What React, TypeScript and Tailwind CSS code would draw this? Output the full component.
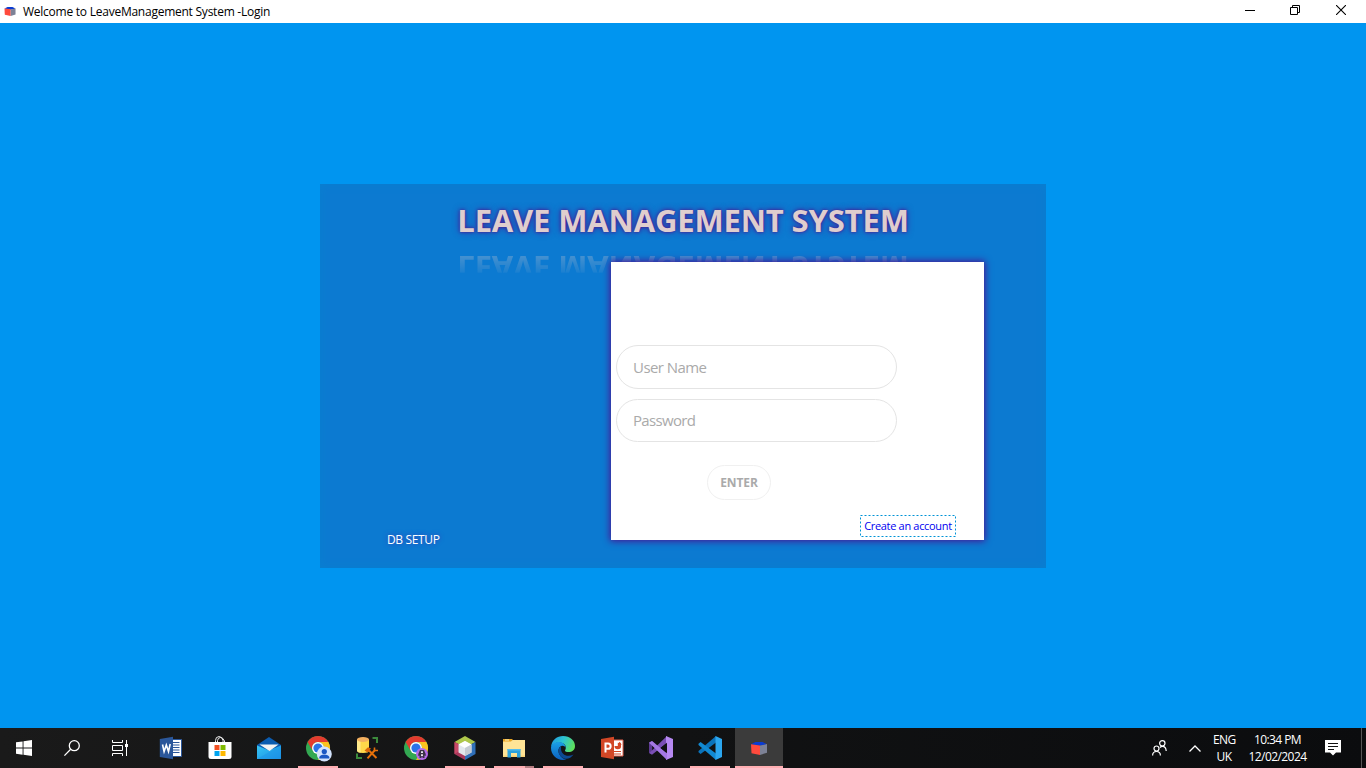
import React, { useState } from "react";

const svg = "block shrink-0 overflow-visible";

function Cube({ className }: { className: string }) {
  return (
    <svg viewBox="0 0 16 13" className={`${svg} ${className}`}>
      <path d="M0 2.200L4.500 0h7L16 2.200 9 3.800z" fill="#0a3bd2" />
      <path d="M0 2.200l9 1.200V13L.5 11.300z" fill="#ff4a3d" />
      <path d="M9 3.600L16 2v8.700L9 13z" fill="#7d8296" />
    </svg>
  );
}

function WindowsLogo() {
  return (
    <svg viewBox="0 0 16 16" className={`${svg} size-4`} fill="#fff">
      <path d="M0 2.300L6.600 1.400v6.200H0zM7.500 1.200L16 0v7.600H7.500zM0 8.500h6.600v6.200L0 13.800zM7.500 8.500H16V16l-8.500-1.200z" />
    </svg>
  );
}

function SearchGlyph() {
  return (
    <svg viewBox="0 0 16 16" className={`${svg} size-4`} fill="none" stroke="#fff" strokeWidth="1.300">
      <circle cx="10.300" cy="5.700" r="5" />
      <path d="M6.700 9.300L.4 15.600" />
    </svg>
  );
}

function TaskViewGlyph() {
  return (
    <svg viewBox="0 0 16 16" className={`${svg} size-4`} fill="none" stroke="#fff">
      <path d="M.5 0v2.500h10V0M.5 5.500h10v5H.5zM.5 16v-2.500h10V16M14.500 0v16" />
      <rect x="13" y="4" width="3" height="3" fill="#fff" stroke="none" />
    </svg>
  );
}

function WordIcon() {
  return (
    <svg viewBox="0 0 24 24" className={`${svg} size-6`}>
      <path d="M11 3.500h11.500v17H11z" fill="#fff" stroke="#2b579a" />
      <path d="M14 6.500h6.500M14 9h6.500M14 11.500h6.500M14 14h6.500M14 16.500h6.500" stroke="#2b579a" />
      <path d="M.8 3L14 .8v22.400L.8 21z" fill="#2b579a" />
      <path d="M3.500 8.500l1.600 7 2.200-6.500 2.200 6.500 1.700-7.500" fill="none" stroke="#fff" strokeWidth="1.600" />
    </svg>
  );
}

function StoreIcon() {
  return (
    <svg viewBox="0 0 24 24" className={`${svg} size-6`}>
      <path d="M7.500 7V4.500Q7.500 .7 11 .5q3.500.2 4 4V7M9.500 7V4.500Q10 1.500 12.500 1.500T16.500 5V7" fill="none" stroke="#e8e8e8" />
      <path d="M.5 6h23v14.500q0 2.500-2.500 2.500H3Q.5 23 .5 20.500z" fill="#fff" />
      <path d="M6.500 9h5v5h-5z" fill="#f25022" />
      <path d="M12.500 9h5v5h-5z" fill="#7fba00" />
      <path d="M6.500 15h5v5h-5z" fill="#00a4ef" />
      <path d="M12.500 15h5v5h-5z" fill="#ffb900" />
    </svg>
  );
}

function MailIcon() {
  return (
    <svg viewBox="0 0 24 24" className={`${svg} size-6`}>
      <defs>
        <linearGradient id="mailBody" x1="0" y1="0" x2="1" y2="1">
          <stop stopColor="#36c5f5" />
          <stop offset="1" stopColor="#1b8fe2" />
        </linearGradient>
      </defs>
      <path d="M0 9L12 1l12 8v8H0z" fill="#0b5cb0" />
      <path d="M0 9.500l12 5 12-5V23H0z" fill="url(#mailBody)" />
      <path d="M0 23L24 9.500V23z" fill="#1c94e8" opacity=".5" />
      <path d="M2.500 8.500h19L12.500 15z" fill="#f3f3f3" />
    </svg>
  );
}

function ChromeIcon({ badge }: { badge: "person" | "avatar" }) {
  return (
    <svg viewBox="0 0 24 24" className={`${svg} size-6`}>
      <circle cx="12" cy="12" r="12" fill="#33a852" />
      <path d="M1.600 6A12 12 0 0 1 22.400 6H12a6 6 0 0 0-5.200 9z" fill="#e33b2e" />
      <path d="M22.400 6A12 12 0 0 1 12 24l5.200-9A6 6 0 0 0 12 6z" fill="#fcc31e" />
      <circle cx="12" cy="12" r="6" fill="#fff" />
      <circle cx="12" cy="12" r="4.600" fill="#2a73e8" />
      {badge === "person" ? (
        <>
          <circle cx="18.300" cy="18" r="7.500" fill="#d3e3fd" />
          <circle cx="18.300" cy="15.500" r="2.600" fill="#1b57c4" />
          <path d="M13.300 22.500v-1.500q1-2.500 5-2.500t5 2.500v1.500z" fill="#1b57c4" />
        </>
      ) : (
        <>
          <circle cx="18" cy="18" r="6" fill="#b46ae8" />
          <path d="M14.300 18l1.700-4h4l1.700 4v2l-1.200-.5V22h-2v-1.500h-1V22h-2v-2.500l-1.200.5z" fill="#3b3347" />
          <path d="M17 15.300h2v1.700h-2zM17 18.300h2V20h-2z" fill="#e7e0ee" />
        </>
      )}
    </svg>
  );
}

function DbToolsIcon() {
  return (
    <svg viewBox="0 0 24 24" className={`${svg} size-6`}>
      <path d="M17.500 2H22v5M2 17.500V22h5" fill="none" stroke="#3c8a3c" strokeWidth="2" />
      <path d="M2 3.500v11q0 2.500 6 2.500t6-2.500v-11z" fill="#ffd84a" />
      <path d="M2 3.500v11q0 1.500 3.500 2.200V4z" fill="#ffe98a" />
      <ellipse cx="8" cy="3.500" rx="6" ry="2.500" fill="#f3b060" />
      <path d="M12.500 22.300L20 14M14 14.500l7.500 7.500" stroke="#e8710a" strokeWidth="2" />
      <path d="M9.500 14.500l3.500-3.300 3 1.300-3.500 4z" fill="#d9650a" />
      <path d="M19.500 11.500v3h3.500" fill="none" stroke="#e8710a" strokeWidth="1.600" />
    </svg>
  );
}

function NetBeansIcon() {
  return (
    <svg viewBox="0 0 24 24" className={`${svg} size-6`}>
      <path d="M12 0l10.500 6L12 11.500 1.500 6z" fill="#afc84b" />
      <path d="M1.500 6L12 12v12L1.500 18z" fill="#a9375a" />
      <path d="M22.500 6L12 12v12l10.500-6z" fill="#2f6fb8" />
      <path d="M1.500 6l4 2v7.500l-4 2.500z" fill="#c74a68" />
      <path d="M12 5l6.500 3.500v8L12 20l-6.500-3.500v-8z" fill="#e3e8ed" />
      <path d="M12 5l6.500 3.500L12 12 5.500 8.500z" fill="#fff" />
      <path d="M12 12l6.500-3.500v8L12 20z" fill="#c5ccd4" />
    </svg>
  );
}

function FolderIcon() {
  return (
    <svg viewBox="0 0 24 24" className={`${svg} size-6`}>
      <path d="M1 3h9.500v3H1z" fill="#e9a523" />
      <path d="M3 3.500h4v1H3z" fill="#fff2c0" />
      <path d="M1 5.500h8L10.500 4H23v17H1z" fill="#ffe496" />
      <path d="M1 19.500h22V21H1z" fill="#f8d478" />
      <path d="M5.500 13h13v8.500h-3.500V17H9v4.500H5.500z" fill="#2ba1dc" />
      <path d="M5.500 13h13v1.500h-13z" fill="#55bdec" />
    </svg>
  );
}

function EdgeIcon() {
  return (
    <svg viewBox="0 0 24 24" className={`${svg} size-6`}>
      <defs>
        <linearGradient id="edgeTop" x1="0" y1=".2" x2="1" y2=".5">
          <stop stopColor="#1f9ae0" />
          <stop offset=".5" stopColor="#2dc4d0" />
          <stop offset="1" stopColor="#5fe05a" />
        </linearGradient>
        <linearGradient id="edgeBody" x1="0" y1="0" x2="0" y2="1">
          <stop stopColor="#1aa0e6" />
          <stop offset="1" stopColor="#0c60c0" />
        </linearGradient>
      </defs>
      <path d="M0 10.500C1 4 6 0 12 0c7 0 12 4.500 12 10 0 4-3 6-6.500 6-2.500 0-4-.8-3.500-1.600C16.500 10.500 13.500 6.500 8.500 6.500 4.500 6.500 1.500 8.500 0 10.500z" fill="url(#edgeTop)" />
      <path d="M0 12c0-4 4-6 8-6 4.500 0 7 3.300 6.500 6-.5-1.500-2-2.500-4-2-3 1-4 5-2 8.500 1.500 3 4 4.700 7 4.800C8 26 0 20 0 12z" fill="url(#edgeBody)" />
      <path d="M10 10.300C6.500 12.500 7 17.500 10 20.500c4 4 9.500 2.500 12.500-2-6 3-12.500.5-12.500-6z" fill="#0d4a93" />
    </svg>
  );
}

function PowerPointIcon() {
  return (
    <svg viewBox="0 0 24 24" className={`${svg} size-6`}>
      <path d="M11 4h12v16H11z" fill="#fff" stroke="#e0604a" />
      <path d="M14.500 10a3.300 3.300 0 1 0 3.300-3.300V10z" fill="#d24726" />
      <path d="M19 5.800A3.500 3.500 0 0 1 21.500 9H19z" fill="#d24726" />
      <path d="M14 15.500h7M14 18h7" stroke="#d24726" strokeWidth="1.200" />
      <path d="M1 3L14 .8v22.400L1 21z" fill="#d24726" />
      <path d="M5.500 16.500v-9H8a2.500 2.500 0 0 1 0 5.300H5.500" fill="none" stroke="#fff" strokeWidth="2" />
    </svg>
  );
}

function VisualStudioIcon() {
  return (
    <svg viewBox="0 0 24 24" className={`${svg} size-6`}>
      <path d="M0 6.500L3 5l3.500 3L3.200 9.500v6L0 17z" fill="#5d3a92" />
      <path d="M0 17l3 1.700L18 6.800V0L3.200 14.200z" fill="#7a4fb5" />
      <path d="M17 0l7 3v18l-7 3z" fill="#b689f2" />
      <path d="M0 6.800L3 5l15 12.200V24L3.200 9.700z" fill="#a478e4" />
      <path d="M18 6.800v10.400L11.500 12z" fill="#111214" />
    </svg>
  );
}

function VSCodeIcon() {
  return (
    <svg viewBox="0 0 24 24" className={`${svg} size-6`}>
      <path d="M.5 16.200L2.600 18 18 6.500V0L.5 15z" fill="#0a73bb" />
      <path d="M.5 7.800L2.600 6 18 17.500V24L.5 9z" fill="#1189d2" />
      <path d="M17.500 0L24 3v18l-6.500 3z" fill="#2ba6ef" />
    </svg>
  );
}

type App = { name: string; icon: React.ReactNode; bar?: "open" | "stacked" | "active" };

const apps: App[] = [
  { name: "word", icon: <WordIcon /> },
  { name: "store", icon: <StoreIcon /> },
  { name: "mail", icon: <MailIcon /> },
  { name: "chrome", icon: <ChromeIcon badge="person" />, bar: "open" },
  { name: "dbtools", icon: <DbToolsIcon /> },
  { name: "chrome2", icon: <ChromeIcon badge="avatar" /> },
  { name: "netbeans", icon: <NetBeansIcon />, bar: "open" },
  { name: "explorer", icon: <FolderIcon />, bar: "stacked" },
  { name: "edge", icon: <EdgeIcon />, bar: "open" },
  { name: "powerpoint", icon: <PowerPointIcon /> },
  { name: "vs", icon: <VisualStudioIcon /> },
  { name: "vscode", icon: <VSCodeIcon />, bar: "open" },
  { name: "leave", icon: <Cube className="h-[13px] w-4" />, bar: "active" },
];

function TitleBar() {
  return (
    <header className="flex h-[23px] shrink-0 items-center bg-white pl-1 text-black">
      <Cube className="h-[9px] w-3" />
      <span className="ml-[7px] text-[12px] leading-[23px] tracking-[-0.245px] whitespace-nowrap">
        Welcome to LeaveManagement System -Login
      </span>
      <div className="ml-auto flex items-center pr-5 pb-[3px]">
        <svg viewBox="0 0 10 10" className="mr-[35px] size-[10px]" stroke="#000">
          <path d="M0 5.500h10" />
        </svg>
        <svg viewBox="0 0 10 10" className="mr-[36px] size-[10px]" fill="none" stroke="#000">
          <path d="M.5 2.500h7v7h-7zM2.500 2.500v-2h7v7h-2" />
        </svg>
        <svg viewBox="0 0 10 10" className="size-[10px]" stroke="#000" strokeWidth="1.100">
          <path d="M0 0l10 10M10 0L0 10" />
        </svg>
      </div>
    </header>
  );
}

function LoginCard() {
  const [user, setUser] = useState("");
  const [password, setPassword] = useState("");
  const field =
    "block w-[281px] rounded-full border border-[#e4e4e4] bg-white pl-4 pr-4 text-[15px] text-[#666] outline-none placeholder:text-[#aaaaaa] placeholder:opacity-100";
  return (
    <section className="relative h-[384px] w-[726px] bg-[#0c7ad1] shadow-[inset_0_0_8px_#0880d0]">
      <h1 className="pt-[15px] text-center text-[31px] leading-[42px] font-bold tracking-[-0.14px] whitespace-nowrap text-[#dfcece] [text-shadow:0_0_3px_#4b1590,0_0_7px_#4b1590c0]">
        LEAVE MANAGEMENT SYSTEM
      </h1>
      <div
        aria-hidden="true"
        className="absolute inset-x-0 top-[63px] -scale-y-100 text-center text-[31px] leading-[42px] font-bold tracking-[-0.14px] whitespace-nowrap text-[#dfcece] [mask-image:linear-gradient(to_top,rgba(0,0,0,.28)_20%,rgba(0,0,0,.08)_60%,transparent_62%)]"
      >
        LEAVE MANAGEMENT SYSTEM
      </div>
      <div className="relative mt-[21px] flex items-end pl-[67px]">
        <button className="-mb-[12px] w-[224px] text-left text-[12px] leading-6 tracking-[-0.35px] text-white [text-shadow:0_0_5px_#3a35b5]">
          DB SETUP
        </button>
        <form
          className="flex h-[278px] w-[373px] flex-col bg-white pt-[83px] pl-[5px] shadow-[0_0_7px_1px_#4b1090]"
          onSubmit={(e) => e.preventDefault()}
        >
          <input className={`${field} h-[44px] tracking-[-0.56px]`} placeholder="User Name" value={user} onChange={(e) => setUser(e.target.value)} />
          <input type="password" className={`${field} mt-[10px] h-[43px] pb-[2px] tracking-[-0.68px]`} placeholder="Password" value={password} onChange={(e) => setPassword(e.target.value)} />
          <button className="mt-[23px] ml-[91px] h-[35px] w-[64px] rounded-full border border-[#f0f0f0] bg-white text-[12px] font-bold tracking-[-0.1px] text-[#aaaaaa]">
            ENTER
          </button>
          <a className="relative mt-[15px] ml-[244px] flex h-[22px] w-[96px] items-center justify-center text-[11px] tracking-[-0.32px] whitespace-nowrap text-[#0000f0]">
            Create an account
            <svg viewBox="0 0 96 22" className="absolute inset-0 h-[22px] w-[96px]" fill="none" stroke="#0093d6">
              <rect x=".5" y=".5" width="95" height="21" strokeDasharray="2 2" />
            </svg>
          </a>
        </form>
      </div>
    </section>
  );
}

function Taskbar() {
  return (
    <footer className="flex h-10 shrink-0 bg-gradient-to-r from-[#1a1a1a] via-[#111213] to-[#0b0c0e] text-[12px] text-white">
      <div className="mr-[3px] flex">
        {[<WindowsLogo key="w" />, <SearchGlyph key="s" />, <TaskViewGlyph key="t" />].map((icon, i) => (
          <div key={i} className="flex w-12 items-center justify-center">
            {icon}
          </div>
        ))}
      </div>
      <div className="flex gap-px">
        {apps.map((app) => (
          <div key={app.name} className={`flex w-12 flex-col items-center ${app.bar === "active" ? "bg-[#3b3b3b]" : ""}`}>
            <div className="flex h-[38px] items-center pt-[2px]">{app.icon}</div>
            {app.bar === "active" && <div className="h-[2px] w-12 bg-[#ffaeb2]" />}
            {app.bar === "open" && <div className="h-[2px] w-10 bg-[#ffaeb2]" />}
            {app.bar === "stacked" && (
              <div className="flex h-[2px] w-10">
                <div className="w-[31px] bg-[#ffaeb2]" />
                <div className="w-[9px] bg-[#b57e82]" />
              </div>
            )}
          </div>
        ))}
      </div>
      <div className="ml-auto flex items-center">
        <svg viewBox="0 0 15 16" className="mr-[22px] h-4 w-[15px]" fill="none" stroke="#fff" strokeWidth="1.200">
          <circle cx="10.300" cy="3.300" r="2.700" />
          <circle cx="4.500" cy="8.500" r="2.500" />
          <path d="M.6 15.500q0-4 3.900-4t3.900 4M8 7.500q1-1.200 2.300-1.200 3.700 0 3.900 4.700" />
        </svg>
        <svg viewBox="0 0 12 7" className="mr-3 h-[7px] w-3" fill="none" stroke="#fff" strokeWidth="1.300">
          <path d="M.5 6.500L6 1l5.500 5.500" />
        </svg>
        <div className="w-[22px] text-center leading-[17.500px] tracking-[-0.6px] whitespace-nowrap">
          <div>ENG</div>
          <div>UK</div>
        </div>
        <div className="ml-[13px] w-[59px] text-center leading-[17.500px] tracking-[-0.580px] whitespace-nowrap">
          <div>10:34 PM</div>
          <div>12/02/2024</div>
        </div>
        <svg viewBox="0 0 16 16" className="ml-[18px] size-4">
          <path d="M0 0h16v12.500h-5L8 15.500l-3-3H0z" fill="#fff" />
          <path d="M3 3.500h10M3 6.500h10M3 9.500h6" stroke="#111" />
        </svg>
        <div className="mr-[4px] ml-[20px] h-10 w-px bg-[#555]" />
      </div>
    </footer>
  );
}

export default function App() {
  return (
    <div className="flex h-[768px] w-[1366px] flex-col overflow-hidden bg-[#0095f0] font-['Open_Sans','Noto_Sans',sans-serif]">
      <TitleBar />
      <main className="flex flex-1 justify-center pt-[161px]">
        <LoginCard />
      </main>
      <Taskbar />
    </div>
  );
}
